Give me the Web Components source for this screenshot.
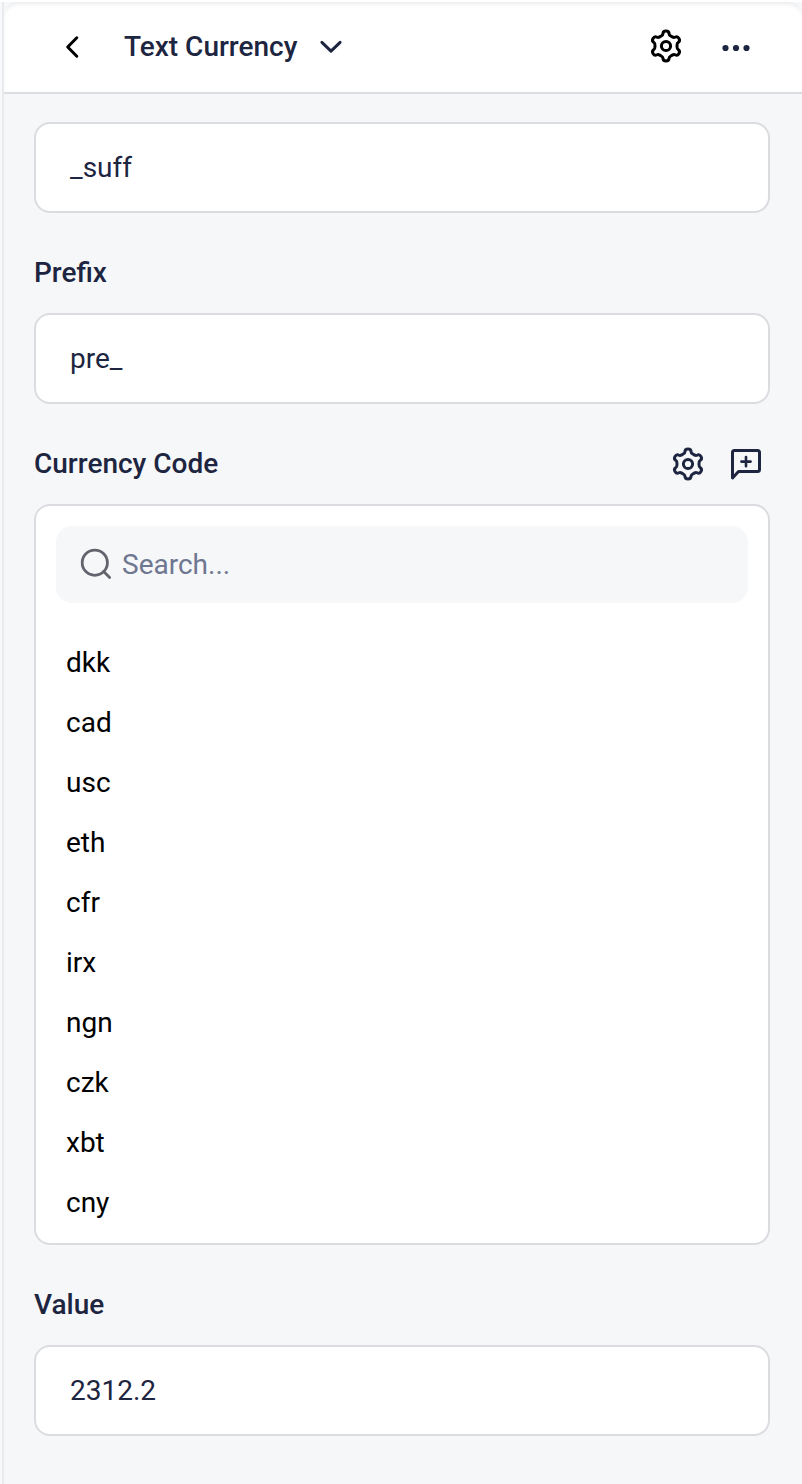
<!DOCTYPE html>
<html lang="en">
<head>
<meta charset="utf-8">
<title>Text Currency</title>
<style>
html, body { margin: 0; height: 100%; }
body { background: #fff; font-family: Roboto, "Liberation Sans", sans-serif; font-size: 28px; line-height: 34px; color: #1d2540; overflow: hidden; }
</style>
</head>
<body>
<property-panel>
  <panel-header slot="header">Text Currency</panel-header>
  <field-box>_suff</field-box>
  <field-label>Prefix</field-label>
  <field-box>pre_</field-box>
  <field-label>Currency Code
    <ui-icon slot="actions" name="gear"></ui-icon>
    <ui-icon slot="actions" name="comment"></ui-icon>
  </field-label>
  <option-list>
    <option-row>dkk</option-row>
    <option-row>cad</option-row>
    <option-row>usc</option-row>
    <option-row>eth</option-row>
    <option-row>cfr</option-row>
    <option-row>irx</option-row>
    <option-row>ngn</option-row>
    <option-row>czk</option-row>
    <option-row>xbt</option-row>
    <option-row>cny</option-row>
  </option-list>
  <field-label>Value</field-label>
  <field-box>2312.2</field-box>
</property-panel>
<script>
const define = (name, html) => customElements.define(name, class extends HTMLElement {
  constructor() {
    super();
    const t = document.createElement('template');
    t.innerHTML = html;
    this.attachShadow({ mode: 'open' }).append(t.content.cloneNode(true));
  }
});

// Gear outline: one lobe, repeated every 60 degrees around the centre.
function gearPath() {
  const lobe = [[-4.4,-10.3],[-3.2,-10.5],[-3.1,-12.2],[-3,-14],[-1.9,-15],[0,-15],[1.9,-15],[3,-14],[3.1,-12.2],[3.2,-10.5],[4.4,-10.3],[5.5,-9.55]];
  let d = 'M-5.5 -9.55';
  for (let i = 0; i < 6; i++) {
    const a = i * Math.PI / 3, c = Math.cos(a), s = Math.sin(a);
    d += 'C' + lobe.map(([x, y]) => (x * c - y * s).toFixed(2) + ' ' + (x * s + y * c).toFixed(2)).join(' ');
  }
  return d + 'Z';
}
const ICONS = {
  gear: [36, 36, `<g transform="translate(18 18)"><path d="${gearPath()}"/><circle r="4.6"/></g>`],
  comment: [36, 36, '<path d="M4.5 32V6.5Q4.5 4.5 6.5 4.5H29.5Q31.5 4.5 31.5 6.5V23.5Q31.5 25.5 29.5 25.5H10.5Z"/><path style="stroke-width:2.6" d="M18 11V20.2M13.4 15.6H22.6"/>'],
  back: [16, 24, '<path d="M12.8 2.8L3.7 12L12.8 21.2"/>'],
  down: [24, 16, '<path d="M2.9 3.4L12 12.2L21.1 3.4"/>'],
  dots: [30, 8, '<g fill="currentColor" stroke="none"><circle cx="4.5" cy="4" r="3.1"/><circle cx="15" cy="4" r="3.1"/><circle cx="25.5" cy="4" r="3.1"/></g>'],
  search: [34, 34, '<circle cx="15.8" cy="15.7" r="12.6"/><path d="M24.7 24.6L30.6 30.5"/>']
};
customElements.define('ui-icon', class extends HTMLElement {
  constructor() { super(); this.attachShadow({ mode: 'open' }); }
  connectedCallback() {
    const [w, h, body] = ICONS[this.getAttribute('name')];
    this.shadowRoot.innerHTML = `<style>:host{display:block;flex:none}svg{display:block;stroke-width:var(--stroke, 3)}</style>
      <svg width="${w}" height="${h}" viewBox="0 0 ${w} ${h}" fill="none" stroke="currentColor" stroke-linecap="round" stroke-linejoin="round">${body}</svg>`;
  }
});

define('property-panel', `<style>
  :host { display: block; box-sizing: border-box; height: 100vh; padding-top: 2px; }
  .frame { box-sizing: border-box; height: 100%; border-left: 2px solid #e9eaed; margin-left: 2px; background: #f5f7f9; box-shadow: -2px 0 #f8f9fa; }
  .content { padding: 28px 32px 0 30px; }
</style><div class="frame"><slot name="header"></slot><div class="content"><slot></slot></div></div>`);

define('panel-header', `<style>
  :host { display: flex; align-items: center; box-sizing: border-box; height: 92px; padding: 0 51px 0 60px; background: #fff; border-bottom: 2px solid #dcdde0; border-radius: 14px 14px 0 0; box-shadow: inset 0 4px 4px -2px #e9eaec; font-weight: 500; }
  .back { color: #000; }
  .title { margin: 0 22px 0 44px; }
  .gear { color: #000; margin: 0 37px 2px auto; }
  .dots { margin-top: 2px; }
</style>
<ui-icon class="back" name="back"></ui-icon>
<span class="title"><slot></slot></span>
<ui-icon name="down"></ui-icon>
<ui-icon class="gear" name="gear"></ui-icon>
<ui-icon class="dots" name="dots"></ui-icon>`);

define('field-box', `<style>
  :host { display: flex; align-items: center; box-sizing: border-box; height: 91px; padding: 0 34px; background: #fff; border: 2px solid #dbdce0; border-radius: 16px; }
</style><slot></slot>`);

define('field-label', `<style>
  :host { display: flex; align-items: center; justify-content: space-between; box-sizing: border-box; height: 100px; padding: 20px 6px 0 0; font-weight: 500; }
  .actions { display: flex; gap: 22px; }
</style><span><slot></slot></span><div class="actions"><slot name="actions"></slot></div>`);

define('option-list', `<style>
  :host { display: block; box-sizing: border-box; height: 741px; padding: 20px; background: #fff; border: 2px solid #dbdce0; border-radius: 16px; overflow: hidden; }
  .search { display: flex; align-items: center; gap: 9px; height: 77px; padding-left: 23px; border-radius: 16px; background: #f5f7f9; color: #6f7690; }
  ui-icon { color: #63636e; --stroke: 2.8; margin-bottom: 2px; }
  .rows { padding: 30px 10px 0; color: #000; }
</style>
<div class="search"><ui-icon name="search"></ui-icon><span>Search...</span></div>
<div class="rows"><slot></slot></div>`);

define('option-row', `<style>
  :host { display: flex; align-items: center; height: 60px; }
</style><slot></slot>`);
</script>
</body>
</html>
